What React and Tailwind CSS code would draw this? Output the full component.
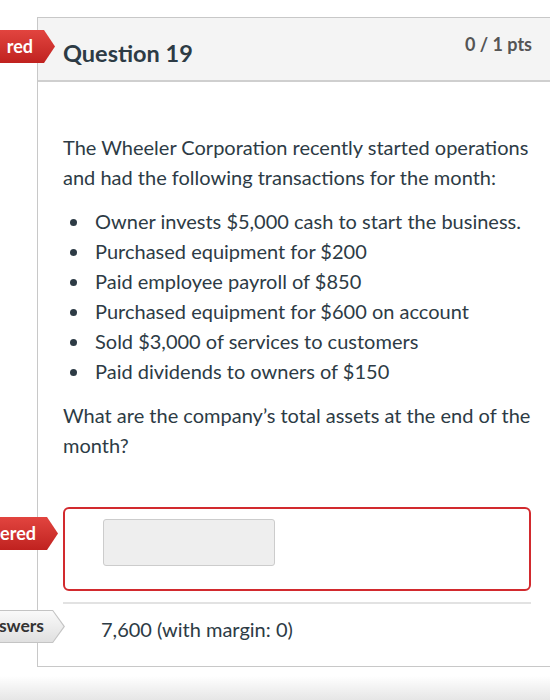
import React from "react";

function RedBadge({ top, tip, text }) {
  return (
    <div
      className="absolute left-0 h-[33px] bg-gradient-to-b from-[#e2443f] to-[#c0211f] [clip-path:polygon(0_0,calc(100%-11px)_0,100%_50%,calc(100%-11px)_100%,0_100%)] flex items-center justify-end pr-[22px]"
      style={{ top, width: tip }}
    >
      <span className="text-white font-bold text-[18px] whitespace-nowrap">{text}</span>
    </div>
  );
}

function GreyBadge({ top, tip, text }) {
  return (
    <div className="absolute left-0 h-[33px]" style={{ top, width: tip }}>
      <div className="absolute inset-0 bg-[#c4c4c4] [clip-path:polygon(0_0,calc(100%-12px)_0,100%_50%,calc(100%-12px)_100%,0_100%)]" />
      <div className="absolute left-0 top-[1px] bottom-[1px] right-[1.5px] bg-gradient-to-b from-[#fafafa] to-[#e0e0e0] [clip-path:polygon(0_0,calc(100%-11px)_0,100%_50%,calc(100%-11px)_100%,0_100%)]" />
      <div className="absolute inset-0 flex items-center justify-end pr-[21px]">
        <span className="text-[#333] font-bold text-[17.5px] whitespace-nowrap">{text}</span>
      </div>
    </div>
  );
}

export default function App() {
  const items = [
    "Owner invests $5,000 cash to start the business.",
    "Purchased equipment for $200",
    "Paid employee payroll of $850",
    "Purchased equipment for $600 on account",
    "Sold $3,000 of services to customers",
    "Paid dividends to owners of $150",
  ];
  return (
    <div className="relative w-[550px] h-[700px] overflow-hidden bg-white text-[#2d3b45] font-['Lato','Noto_Sans',sans-serif]">
      <div className="pt-[17px] pl-[37px]">
        <div className="w-[560px] border-l border-t border-b border-[#c8c8c8]">
          <div className="h-[64px] bg-[#f4f4f4] border-b-2 border-[#cfcfcf] flex items-start justify-between pl-[25px] pr-[65px]">
            <div className="pt-[21px] text-[23.5px] font-bold leading-[28px]">Question 19</div>
            <div className="pt-[15px] text-[18px] font-bold text-[#555] leading-[22px]">0 / 1 pts</div>
          </div>
          <div className="pl-[25px] pt-[50px] w-[500px] text-[20px] leading-[30px]">
            <p>The Wheeler Corporation recently started operations and had the following transactions for the month:</p>
            <ul className="mt-[14px]">
              {items.map((t) => (
                <li key={t} className="flex items-center">
                  <span className="w-[32px] shrink-0 flex items-center">
                    <span className="ml-[7px] mt-[2px] w-[7px] h-[7px] rounded-full bg-[#2d3b45]" />
                  </span>
                  <span>{t}</span>
                </li>
              ))}
            </ul>
            <p className="mt-[14px]">What are the company’s total assets at the end of the month?</p>
            <div className="mt-[47px] h-[84px] w-[468px] border-2 border-[#d22a2e] rounded-[6px] pt-[10px] pl-[38px]">
              <div className="w-[172px] h-[47px] bg-[#eeeeee] border border-[#cccccc] rounded-[3px]" />
            </div>
            <div className="mt-[11px] w-[468px] border-t-2 border-[#e2e2e2]" />
            <div className="pl-[38px] pt-[10px] h-[62px]">7,600 (with margin: 0)</div>
          </div>
        </div>
      </div>
      <RedBadge top={30} tip={55} text="red" />
      <RedBadge top={517} tip={58} text="ered" />
      <GreyBadge top={610} tip={65} text="swers" />
      <div className="absolute left-0 right-0 bottom-0 h-[24px] bg-gradient-to-b from-white to-[#e6e6e6]" />
    </div>
  );
}
